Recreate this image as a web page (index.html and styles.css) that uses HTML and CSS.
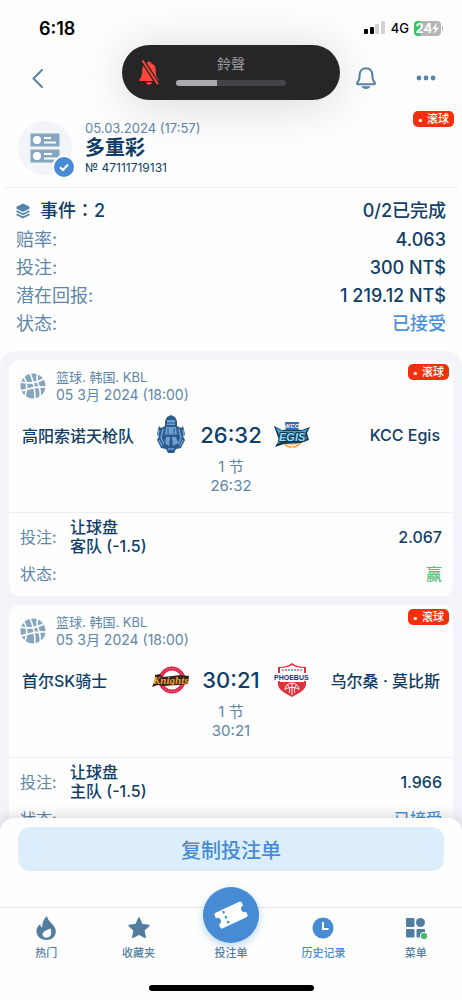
FILE: index.html
```html
<!DOCTYPE html>
<html lang="zh-CN">
<head>
    <meta charset="utf-8">
    <meta name="viewport" content="width=device-width, initial-scale=1">
    <title>多重彩</title>
    <link rel="stylesheet" href="styles.css">
</head>
<body>
    <svg width="0" height="0" class="defs" aria-hidden="true">
        <symbol id="ball" viewBox="0 0 26 26">
            <circle cx="13" cy="13" r="12.5" fill="#86a6bf"/>
            <g fill="none" stroke="#fff" stroke-width="1.6">
                <path d="M10 0c3 7 5 15 5 26M0 9c10 2 18 1 25-4M18 0c-2 5-1 9 1 13 1 4 2 8 1 12M3 3c4 5 5 11 2 20M0 18c8-1 12-5 26-4"/>
            </g>
        </symbol>
    </svg>

    <div class="status-bar">
        <span class="clock">6:18</span>
        <div class="indicators">
            <svg width="22" height="14" viewBox="0 0 22 14">
                <rect x="0" y="8" width="4" height="5" rx="1"/>
                <rect x="6" y="6" width="4" height="7" rx="1"/>
                <rect x="11" y="3" width="4" height="10" rx="1" fill="#d2d2d2"/>
                <rect x="17" y="0" width="4" height="13" rx="1" fill="#d2d2d2"/>
            </svg>
            <span class="network">4G</span>
            <div class="battery">24<svg width="7" height="11" viewBox="0 0 7 11"><path d="M4.500 0L0 6h3L2 11l5-6.500H4z" fill="#fff"/></svg></div>
        </div>
    </div>

    <div class="ringer">
        <svg class="ringer-icon" width="22" height="26" viewBox="0 0 22 26">
            <path d="M11 1.500c1.300 0 2 .8 2.200 1.800 3 .8 4.600 3.400 4.600 6.700 0 5.500.9 7.200 2.700 9.500.5.700.3 1.500-.7 1.500H2.200c-1 0-1.200-.8-.7-1.500C3.300 17.200 4.200 15.500 4.200 10c0-3.300 1.600-5.900 4.600-6.700.2-1 .9-1.800 2.200-1.800zM8 22.200h6c-.4 1.700-1.500 2.500-3 2.500s-2.600-.8-3-2.500z" fill="#ff4438"/>
            <path d="M4.800 1l15 23" stroke="#262626" stroke-width="4.500"/>
            <path d="M4.800 1l14.700 22.500" stroke="#ff4438" stroke-width="2" stroke-linecap="round"/>
        </svg>
        <div class="ringer-level">
            <span lang="zh-TW">鈴聲</span>
            <div class="level"><div class="level-fill" style="width: 37%"></div></div>
        </div>
    </div>

    <header class="toolbar">
        <button class="icon-btn" aria-label="返回">
            <svg width="24" height="24" viewBox="0 0 24 24"><path d="M16 4l-8.500 8.500L16 21" class="line"/></svg>
        </button>
        <div class="toolbar-right">
            <button class="icon-btn" aria-label="通知">
                <svg width="24" height="24" viewBox="0 0 24 24">
                    <path d="M12 2.200c-4 0-6.300 2.900-6.300 6.600 0 4.400-.7 6-2.400 7.800-.6.700-.3 1.700.7 1.700h16c1 0 1.300-1 .7-1.700-1.700-1.800-2.400-3.400-2.400-7.800 0-3.700-2.300-6.600-6.300-6.600z" class="line"/>
                    <path d="M7.500 20.300h9c-.7 1.800-2.300 2.700-4.500 2.700s-3.800-.9-4.500-2.700z" fill="#5584aa"/>
                </svg>
            </button>
            <button class="icon-btn" aria-label="更多">
                <svg width="24" height="24" viewBox="0 0 24 24" fill="#5584aa"><circle cx="5" cy="12" r="2.400"/><circle cx="12" cy="12" r="2.400"/><circle cx="19" cy="12" r="2.400"/></svg>
            </button>
        </div>
    </header>

    <main class="content">
        <section class="coupon">
            <div class="coupon-icon">
                <svg width="30" height="30" viewBox="0 0 30 30">
                    <path d="M.5.500h29v13H.5zM.5 16.500h29v13H.5z" fill="#86a6bf"/>
                    <g fill="#fff"><circle cx="7" cy="7" r="4"/><circle cx="7" cy="23" r="4"/></g>
                    <path d="M14 5h7M14 9.500h12M14 21h8M14 25.500h12" stroke="#fff" stroke-width="2"/>
                </svg>
                <svg class="check" width="24" height="24" viewBox="0 0 24 24">
                    <circle cx="12" cy="12" r="11" fill="#468bd4" stroke="#fff" stroke-width="2"/>
                    <path d="M8 12.200l3 2.800 5-5.500" fill="none" stroke="#fff" stroke-width="2"/>
                </svg>
            </div>
            <div class="coupon-text">
                <div class="coupon-date">05.03.2024 (17:57)</div>
                <h1>多重彩</h1>
                <div class="coupon-number">№ 47111719131</div>
            </div>
            <span class="live">滚球</span>
        </section>

        <section class="stats">
            <div class="row total">
                <span class="events" lang="zh-TW">
                    <svg width="14" height="16" viewBox="0 0 14 16">
                        <path d="M7 .500l6.500 3.200v2L7 9 .5 5.700v-2z" fill="#5584aa"/>
                        <path d="M.5 8L7 11.200 13.500 8M.5 11.200L7 14.400l6.500-3.200" fill="none" stroke="#5584aa" stroke-width="1.800"/>
                    </svg>
                    事件：2
                </span>
                <span>0/2已完成</span>
            </div>
            <div class="row"><span class="label">赔率:</span><span>4.063</span></div>
            <div class="row"><span class="label">投注:</span><span>300 NT$</span></div>
            <div class="row"><span class="label">潜在回报:</span><span>1 219.12 NT$</span></div>
            <div class="row"><span class="label">状态:</span><span class="accepted">已接受</span></div>
        </section>

        <section class="events-list">
            <article class="card">
                <div class="card-head">
                    <svg width="26" height="26"><use href="#ball"/></svg>
                    <div>
                        <div>篮球. 韩国. KBL</div>
                        <div class="event-date">05 3月 2024 (18:00)</div>
                    </div>
                    <span class="live">滚球</span>
                </div>
                <div class="match">
                    <span class="team">高阳索诺天枪队</span>
                    <svg class="logo" width="38" height="40" viewBox="0 0 38 40">
                        <path d="M13 6l2-4 4-2 4 2 2 4v5l4 2 2-2 2 8-2 2 2 4-4 8-5 1-2 4h-6l-2-4-5-1-4-8 2-4-2-2 2-8 2 2 4-2z" fill="#2c5b8e"/>
                        <path d="M15 5h8v5h-8zM14 12h10l1 8H13zM14 22h4l-1 9-4-3zM20 22h4l2 6-5 3z" fill="#6fa0cf"/>
                        <path d="M11 14l-2 9 3 6M27 14l2 9-3 6M7 15l-1 6M31 15l1 6M7 25l3 6M31 25l-3 6M16 34h6" stroke="#6fa0cf" stroke-width="1.500" fill="none"/>
                        <path d="M13 8h12M12 20h14M16 13v6M22 13v6" stroke="#2c5b8e" fill="none"/>
                    </svg>
                    <span class="score">26:32</span>
                    <svg class="logo" width="38" height="40" viewBox="0 0 38 40">
                        <circle cx="19" cy="22" r="11" fill="#f1a04a"/>
                        <path d="M11 27c5 5 11 5 16 0M19 12v21M15 31l4-4 4 4" stroke="#fff" fill="none"/>
                        <path d="M1 11l8 4h20l8-3-3 6 2 7-8 3-17 1-9 3 4-7z" fill="#18384f"/>
                        <path d="M3 13l7 3h18l7-2-3 4 2 6-7 2H10l-6 3 3-7z" fill="#35a9dc"/>
                        <path d="M12 7h14l-1 8H13z" fill="#3767b2"/>
                        <text x="13" y="13" class="logo-small">KCC</text>
                        <text x="6" y="26" class="logo-egis">EGIS</text>
                    </svg>
                    <span class="team away">KCC Egis</span>
                </div>
                <div class="period"><div>1 节</div><div>26:32</div></div>
                <div class="bet">
                    <div class="bet-row">
                        <span class="label">投注:</span>
                        <div class="pick">让球盘<br>客队 (-1.5)</div>
                        <span class="odds">2.067</span>
                    </div>
                    <div class="bet-row"><span class="label">状态:</span><span class="odds win">赢</span></div>
                </div>
            </article>

            <article class="card">
                <div class="card-head">
                    <svg width="26" height="26"><use href="#ball"/></svg>
                    <div>
                        <div>篮球. 韩国. KBL</div>
                        <div class="event-date">05 3月 2024 (18:00)</div>
                    </div>
                    <span class="live">滚球</span>
                </div>
                <div class="match">
                    <span class="team">首尔SK骑士</span>
                    <svg class="logo" width="38" height="40" viewBox="0 0 38 40">
                        <circle cx="20" cy="20" r="11.500" fill="#fff" stroke="#de294f" stroke-width="4"/>
                        <circle cx="20" cy="20" r="11.500" fill="none" stroke="#f3a1b1" stroke-dasharray="1 2"/>
                        <path d="M3 15l5-1 2 3 10-1 9-1 8 1-1 8-9 1-16 1-5-1-6 2 3-7z" fill="#362217"/>
                        <text x="1" y="24" class="logo-knights">Knights</text>
                    </svg>
                    <span class="score">30:21</span>
                    <svg class="logo" width="38" height="40" viewBox="0 0 38 40">
                        <path d="M5 7c5 0 10-1 14-4 4 3 9 4 14 4v17c0 6-7 9-14 13C12 33 5 30 5 24z" fill="#e52f3b"/>
                        <path d="M7 8c5 0 9-1 12-3 3 2 7 3 12 3v14H7z" fill="#fff"/>
                        <path d="M0 13h38l-2 8H2z" fill="#fff"/>
                        <path d="M9 10h20" stroke="#7486a4" stroke-width="1.500" stroke-dasharray="2 1"/>
                        <text x="1" y="20" class="logo-phoebus">PHOEBUS</text>
                        <path d="M12 30a7 7 0 0 1 14 0M19 23v12M12 29c4-2 10-2 14 0M14 24c3 3 3 7 2 9M24 24c-3 3-3 7-2 9" stroke="#fff" fill="none"/>
                    </svg>
                    <span class="team away">乌尔桑 · 莫比斯</span>
                </div>
                <div class="period"><div>1 节</div><div>30:21</div></div>
                <div class="bet">
                    <div class="bet-row">
                        <span class="label">投注:</span>
                        <div class="pick">让球盘<br>主队 (-1.5)</div>
                        <span class="odds">1.966</span>
                    </div>
                    <div class="bet-row"><span class="label">状态:</span><span class="odds accepted">已接受</span></div>
                </div>
            </article>
        </section>
    </main>

    <footer class="bottom">
        <div class="sheet">
            <button class="copy-btn">复制投注单</button>
        </div>
        <nav class="tabs">
            <a class="tab" href="#">
                <svg width="24" height="24" viewBox="0 0 24 24" fill="#507da0"><path fill-rule="evenodd" d="M13 0c.5 3.500 2.500 5 4.700 7.500 2.600 2.700 4.100 5 4.100 8 0 5.200-4.300 8.500-9.600 8.500s-9.700-3.400-9.700-8.700c0-3.400 1.600-5.500 3.700-7.300.2 1.800.8 2.800 2 3.500C8 7 9.500 3 13 0zm3.500 12.500c-4 1.500-8 3-8 6 0 2 1.600 3.200 3.800 3.200 3 0 4.900-1.900 4.900-4.700 0-1.500-.3-3-.7-4.500z"/></svg>
                热门
            </a>
            <a class="tab" href="#">
                <svg width="24" height="24" viewBox="0 0 24 24" fill="#507da0"><path d="M12 2l3 6.500 7 .9-5.100 4.900 1.300 7L12 18l-6.200 3.300 1.300-7L2 9.400l7-.9z" stroke="#507da0" stroke-width="1.500" stroke-linejoin="round"/></svg>
                收藏夹
            </a>
            <a class="tab" href="#">
                <span class="fab">
                    <svg width="34" height="34" viewBox="0 0 34 34">
                        <g transform="rotate(-25 17 17)">
                            <path d="M4 8.500h26a2 2 0 0 1 2 2v3a3.500 3.500 0 0 0 0 7v3a2 2 0 0 1-2 2H4a2 2 0 0 1-2-2v-3a3.500 3.500 0 0 0 0-7v-3a2 2 0 0 1 2-2z" fill="#fff"/>
                            <path d="M11.500 10v14" stroke="#468bd4" stroke-width="2.200" stroke-dasharray="2.500 3"/>
                        </g>
                    </svg>
                </span>
                投注单
            </a>
            <a class="tab active" href="#">
                <svg width="24" height="24" viewBox="0 0 24 24"><circle cx="12" cy="12" r="10.500" fill="#468bd4"/><path d="M12 6v7h5.500" fill="none" stroke="#fff" stroke-width="2"/></svg>
                历史记录
            </a>
            <a class="tab" href="#">
                <svg width="24" height="24" viewBox="0 0 24 24" fill="#507da0">
                    <rect x="2" y="2" width="8.500" height="9" rx="1"/><circle cx="16.500" cy="6.500" r="4.500"/>
                    <rect x="2" y="13" width="8.500" height="8.500" rx="1"/><rect x="12.500" y="13" width="8.500" height="8.500" rx="1"/>
                    <circle cx="20" cy="20" r="3.700" fill="#46b764" stroke="#fff" stroke-width="1"/>
                </svg>
                菜单
            </a>
        </nav>
        <div class="home-indicator"></div>
    </footer>
</body>
</html>
```
FILE: styles.css
```css
* {
    box-sizing: border-box;
}
html, body {
    margin: 0;
    padding: 0;
    height: 100%;
}
body {
    position: relative;
    display: flex;
    flex-direction: column;
    overflow: hidden;
    background: #fefefe;
    color: #103e66;
    font-family: Inter, "Noto Sans CJK SC", sans-serif;
    font-size: 16px;
}
:lang(zh-TW) {
    font-family: Inter, "Noto Sans CJK TC", sans-serif;
}
svg {
    display: block;
    flex: none;
}
button {
    border: 0;
    padding: 0;
    background: none;
    font-family: inherit;
    cursor: pointer;
}
.defs {
    position: absolute;
}

/* phone status bar */
.status-bar {
    flex: none;
    display: flex;
    justify-content: space-between;
    align-items: center;
    height: 56px;
    padding: 0 21px 0 39px;
    color: #000;
}
.clock {
    font-size: 18px;
    font-weight: 600;
}
.indicators {
    display: flex;
    align-items: center;
    gap: 5px;
}
.network {
    font-size: 13px;
    font-weight: 500;
}
.battery {
    position: relative;
    display: flex;
    align-items: center;
    justify-content: center;
    width: 27px;
    height: 15px;
    border-radius: 4px;
    background: linear-gradient(90deg, #35c759 24%, #b5b5b5 24%);
    color: #fff;
    font-size: 13px;
    font-weight: 700;
}
.battery::after {
    content: "";
    position: absolute;
    top: 5px;
    right: -2px;
    width: 1px;
    height: 5px;
    background: #b5b5b5;
}
.ringer {
    position: absolute;
    top: 45px;
    left: 50%;
    z-index: 5;
    display: flex;
    align-items: center;
    width: 218px;
    height: 55px;
    padding: 0 16px;
    border-radius: 28px;
    background: #262626;
    box-shadow: 0 4px 50px rgba(0, 0, 0, 0.16);
    color: #98989e;
    font-size: 14px;
    line-height: 20px;
    transform: translateX(-50%);
}
.ringer-level {
    width: 110px;
    margin-left: 16px;
    padding-bottom: 6px;
    text-align: center;
}
.level {
    height: 6px;
    margin-top: 6px;
    border-radius: 3px;
    background: #444448;
    overflow: hidden;
}
.level-fill {
    height: 100%;
    background: #aaaab2;
}

.toolbar {
    flex: none;
    display: flex;
    justify-content: space-between;
    align-items: center;
    height: 44px;
    padding: 0 24px 0 26px;
}
.toolbar-right {
    display: flex;
    gap: 36px;
}
.line {
    fill: none;
    stroke: #5584aa;
    stroke-width: 2;
    stroke-linecap: round;
    stroke-linejoin: round;
}

.content {
    flex: 1;
    min-height: 0;
    overflow-y: auto;
    scrollbar-width: none;
}

/* coupon header */
.coupon {
    position: relative;
    display: flex;
    align-items: center;
    gap: 13px;
    height: 88px;
    margin: 0 4px;
    padding: 8px 14px 0;
    border-bottom: 1px solid #e9eff3;
}
.coupon-icon {
    position: relative;
    display: flex;
    align-items: center;
    justify-content: center;
    width: 54px;
    height: 54px;
    border-radius: 50%;
    background: #f2f4f9;
}
.check {
    position: absolute;
    right: -4px;
    bottom: -4px;
}
.coupon-date {
    color: #5d86a8;
    font-size: 13px;
    line-height: 18px;
}
.coupon h1 {
    margin: 0;
    font-size: 20px;
    font-weight: 600;
    line-height: 22px;
}
.coupon-number {
    font-size: 12px;
    line-height: 18px;
}
.live {
    position: absolute;
    top: 4px;
    right: 4px;
    height: 16px;
    padding: 0 5px;
    border-radius: 5px;
    background: #f3300b;
    color: #fff;
    font-size: 11px;
    font-weight: 500;
    line-height: 16px;
}
.live::before {
    content: "•";
    margin-right: 4px;
    font-size: 10px;
}
.coupon .live {
    top: 11px;
}

.stats {
    padding: 8px 16px 13px;
    font-size: 18px;
    font-weight: 500;
    line-height: 28px;
}
.row {
    display: flex;
    justify-content: space-between;
}
.total {
    line-height: 30px;
}
.events {
    display: flex;
    align-items: center;
    gap: 10px;
}
.label {
    color: #5d86a8;
    font-weight: 400;
}
.accepted {
    color: #4b91d8;
}

/* events */
.events-list {
    display: flex;
    flex-direction: column;
    gap: 9px;
    padding: 9px;
    border-radius: 16px 16px 0 0;
    background: #f2f4f9;
}
.card {
    position: relative;
    border-radius: 10px;
    background: #fefefe;
}
.card-head {
    display: flex;
    align-items: center;
    gap: 10px;
    padding: 8px 11px 0;
    color: #5d86a8;
    font-size: 13px;
    line-height: 18px;
}
.event-date {
    font-size: 14px;
}
.match {
    display: flex;
    align-items: center;
    height: 44px;
    margin-top: 9px;
    padding: 0 13px;
    font-weight: 500;
}
.team {
    flex: 1;
    white-space: nowrap;
}
.away {
    text-align: right;
}
.score {
    width: 83px;
    text-align: center;
    font-size: 22px;
}
.logo-small {
    font: italic 700 6px "Liberation Sans", sans-serif;
    fill: #fff;
}
.logo-egis {
    font: italic 700 11px "Liberation Sans", sans-serif;
    fill: #8fdcf5;
    stroke: #18384f;
    stroke-width: 2px;
    paint-order: stroke;
}
.logo-knights {
    font: italic 700 11px "Liberation Serif", serif;
    fill: #f2a63b;
}
.logo-phoebus {
    font: 700 7px "Liberation Sans", sans-serif;
    fill: #1c2e6b;
}
.period {
    padding-bottom: 17px;
    border-bottom: 1px solid #e9eff3;
    color: #5d86a8;
    font-size: 15px;
    line-height: 19px;
    text-align: center;
}
.bet {
    display: flex;
    flex-direction: column;
    gap: 9px;
    padding: 5px 11px 12px;
    line-height: 19px;
}
.bet-row {
    display: flex;
    align-items: center;
    font-weight: 500;
}
.bet-row .label {
    width: 50px;
}
.odds {
    margin-left: auto;
}
.win {
    color: #5cbf7c;
}

/* bottom sheet and tabs */
.bottom {
    position: relative;
    flex: none;
    margin-top: -12px;
}
.sheet {
    padding: 9px 18px 36px;
    border-radius: 14px 14px 0 0;
    background: #fefefe;
    box-shadow: 0 -2px 14px rgba(0, 0, 0, 0.15);
}
.copy-btn {
    width: 100%;
    height: 44px;
    border-radius: 12px;
    background: #dceefb;
    color: #468bd4;
    font-size: 20px;
    font-weight: 500;
}
.tabs {
    position: relative;
    display: flex;
    padding: 8px 0 24px;
    border-top: 1px solid #dfe6eb;
    background: #fefefe;
}
.tab {
    flex: 1;
    display: flex;
    flex-direction: column;
    align-items: center;
    gap: 5px;
    color: #507da0;
    font-size: 11px;
    font-weight: 500;
    line-height: 16px;
    text-decoration: none;
}
.tab.active {
    color: #468bd4;
}
.fab {
    display: flex;
    align-items: center;
    justify-content: center;
    width: 56px;
    height: 56px;
    margin: -29px 0 -3px;
    border-radius: 50%;
    background: #468bd4;
    box-shadow: 0 3px 8px rgba(70, 139, 212, 0.35);
}
.home-indicator {
    width: 165px;
    height: 6px;
    margin: 0 auto 9px;
    border-radius: 3px;
    background: #000;
}
```
